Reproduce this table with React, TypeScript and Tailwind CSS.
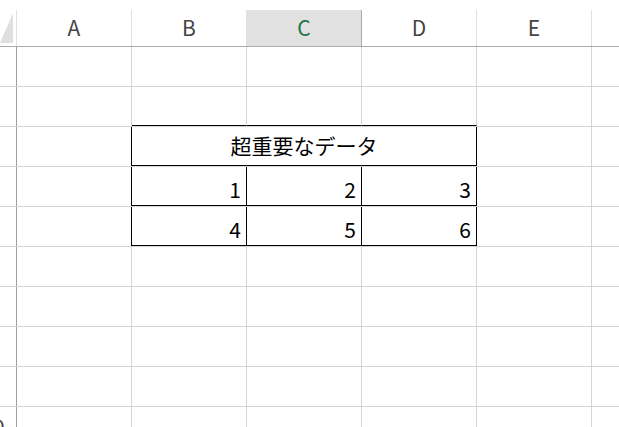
const cols = ['A', 'B', 'C', 'D', 'E'];
const font = { fontFamily: '"Noto Sans CJK JP", "Noto Sans", sans-serif' };

function RowHead({ label }: { label: string }) {
  return (
    <div className="h-full w-[17px] shrink-0 overflow-hidden border-r border-r-[#9f9f9f]">
      <div className="ml-[-27px] flex h-full w-[40px] items-center justify-center text-[21px] text-[#444]">{label}</div>
    </div>
  );
}

function Cell({ className = '', children }: { className?: string; children?: React.ReactNode }) {
  return (
    <div className={`flex h-full w-[115px] shrink-0 items-end justify-end border-r pr-[5px] pb-[5px] text-[21px] leading-none text-black ${className}`}>
      {children}
    </div>
  );
}

function GridRow({ n, children }: { n: number; children?: React.ReactNode }) {
  return (
    <div className="flex h-[40px] shrink-0 border-b border-[#d4d4d4]">
      <RowHead label={String(n)} />
      {children}
    </div>
  );
}

function PlainRow({ n, black = false }: { n: number; black?: boolean }) {
  return (
    <GridRow n={n}>
      <Cell className="border-[#d4d4d4]" />
      <Cell className={`border-r-[#d4d4d4] ${black ? 'border-b border-b-black' : ''}`} />
      <Cell className={`border-r-[#d4d4d4] ${black ? 'border-b border-b-black' : ''}`} />
      <Cell className={`border-r-[#d4d4d4] ${black ? 'border-b border-b-black' : ''}`} />
      <Cell className="border-[#d4d4d4]" />
      <div className="flex-1" />
    </GridRow>
  );
}

function DataRow({ n, vals }: { n: number; vals: number[] }) {
  return (
    <GridRow n={n}>
      <Cell className="border-r-black" />
      {vals.map((v) => (
        <Cell key={v} className="border-r-black border-b border-b-black">
          {v}
        </Cell>
      ))}
      <Cell className="border-[#d4d4d4]" />
      <div className="flex-1" />
    </GridRow>
  );
}

export default function App() {
  return (
    <div className="h-[427px] w-[619px] overflow-hidden bg-white" style={font}>
      <div className="h-[10px]" />
      {/* column headers */}
      <div className="flex h-[37px] border-b border-[#ababab]">
        <div className="relative h-full w-[17px] shrink-0 border-r border-r-[#e0e0e0]">
          <svg className="absolute left-0 top-[3px]" width="13" height="31" viewBox="0 0 13 31">
            <polygon points="13,0 13,30 0,30" fill="#dfdfdf" />
          </svg>
        </div>
        {cols.map((c) => (
          <div
            key={c}
            className={`flex h-full w-[115px] shrink-0 items-center justify-center border-r text-[21px] ${
              c === 'C' ? 'border-r-[#ababab] bg-[#e1e1e1] text-[#217346]' : 'border-r-[#e0e0e0] text-[#444]'
            }`}
          >
            {c}
          </div>
        ))}
        <div className="flex-1" />
      </div>

      <PlainRow n={1} />
      <PlainRow n={2} black />
      <GridRow n={3}>
        <Cell className="border-r-black" />
        <div className="flex h-full w-[345px] shrink-0 items-center justify-center border-r border-b border-black pb-[1px] text-[21px] text-black">
          超重要なデータ
        </div>
        <Cell className="border-[#d4d4d4]" />
        <div className="flex-1" />
      </GridRow>
      <DataRow n={4} vals={[1, 2, 3]} />
      <DataRow n={5} vals={[4, 5, 6]} />
      <PlainRow n={6} />
      <PlainRow n={7} />
      <PlainRow n={8} />
      <PlainRow n={9} />
      <PlainRow n={10} />
    </div>
  );
}
